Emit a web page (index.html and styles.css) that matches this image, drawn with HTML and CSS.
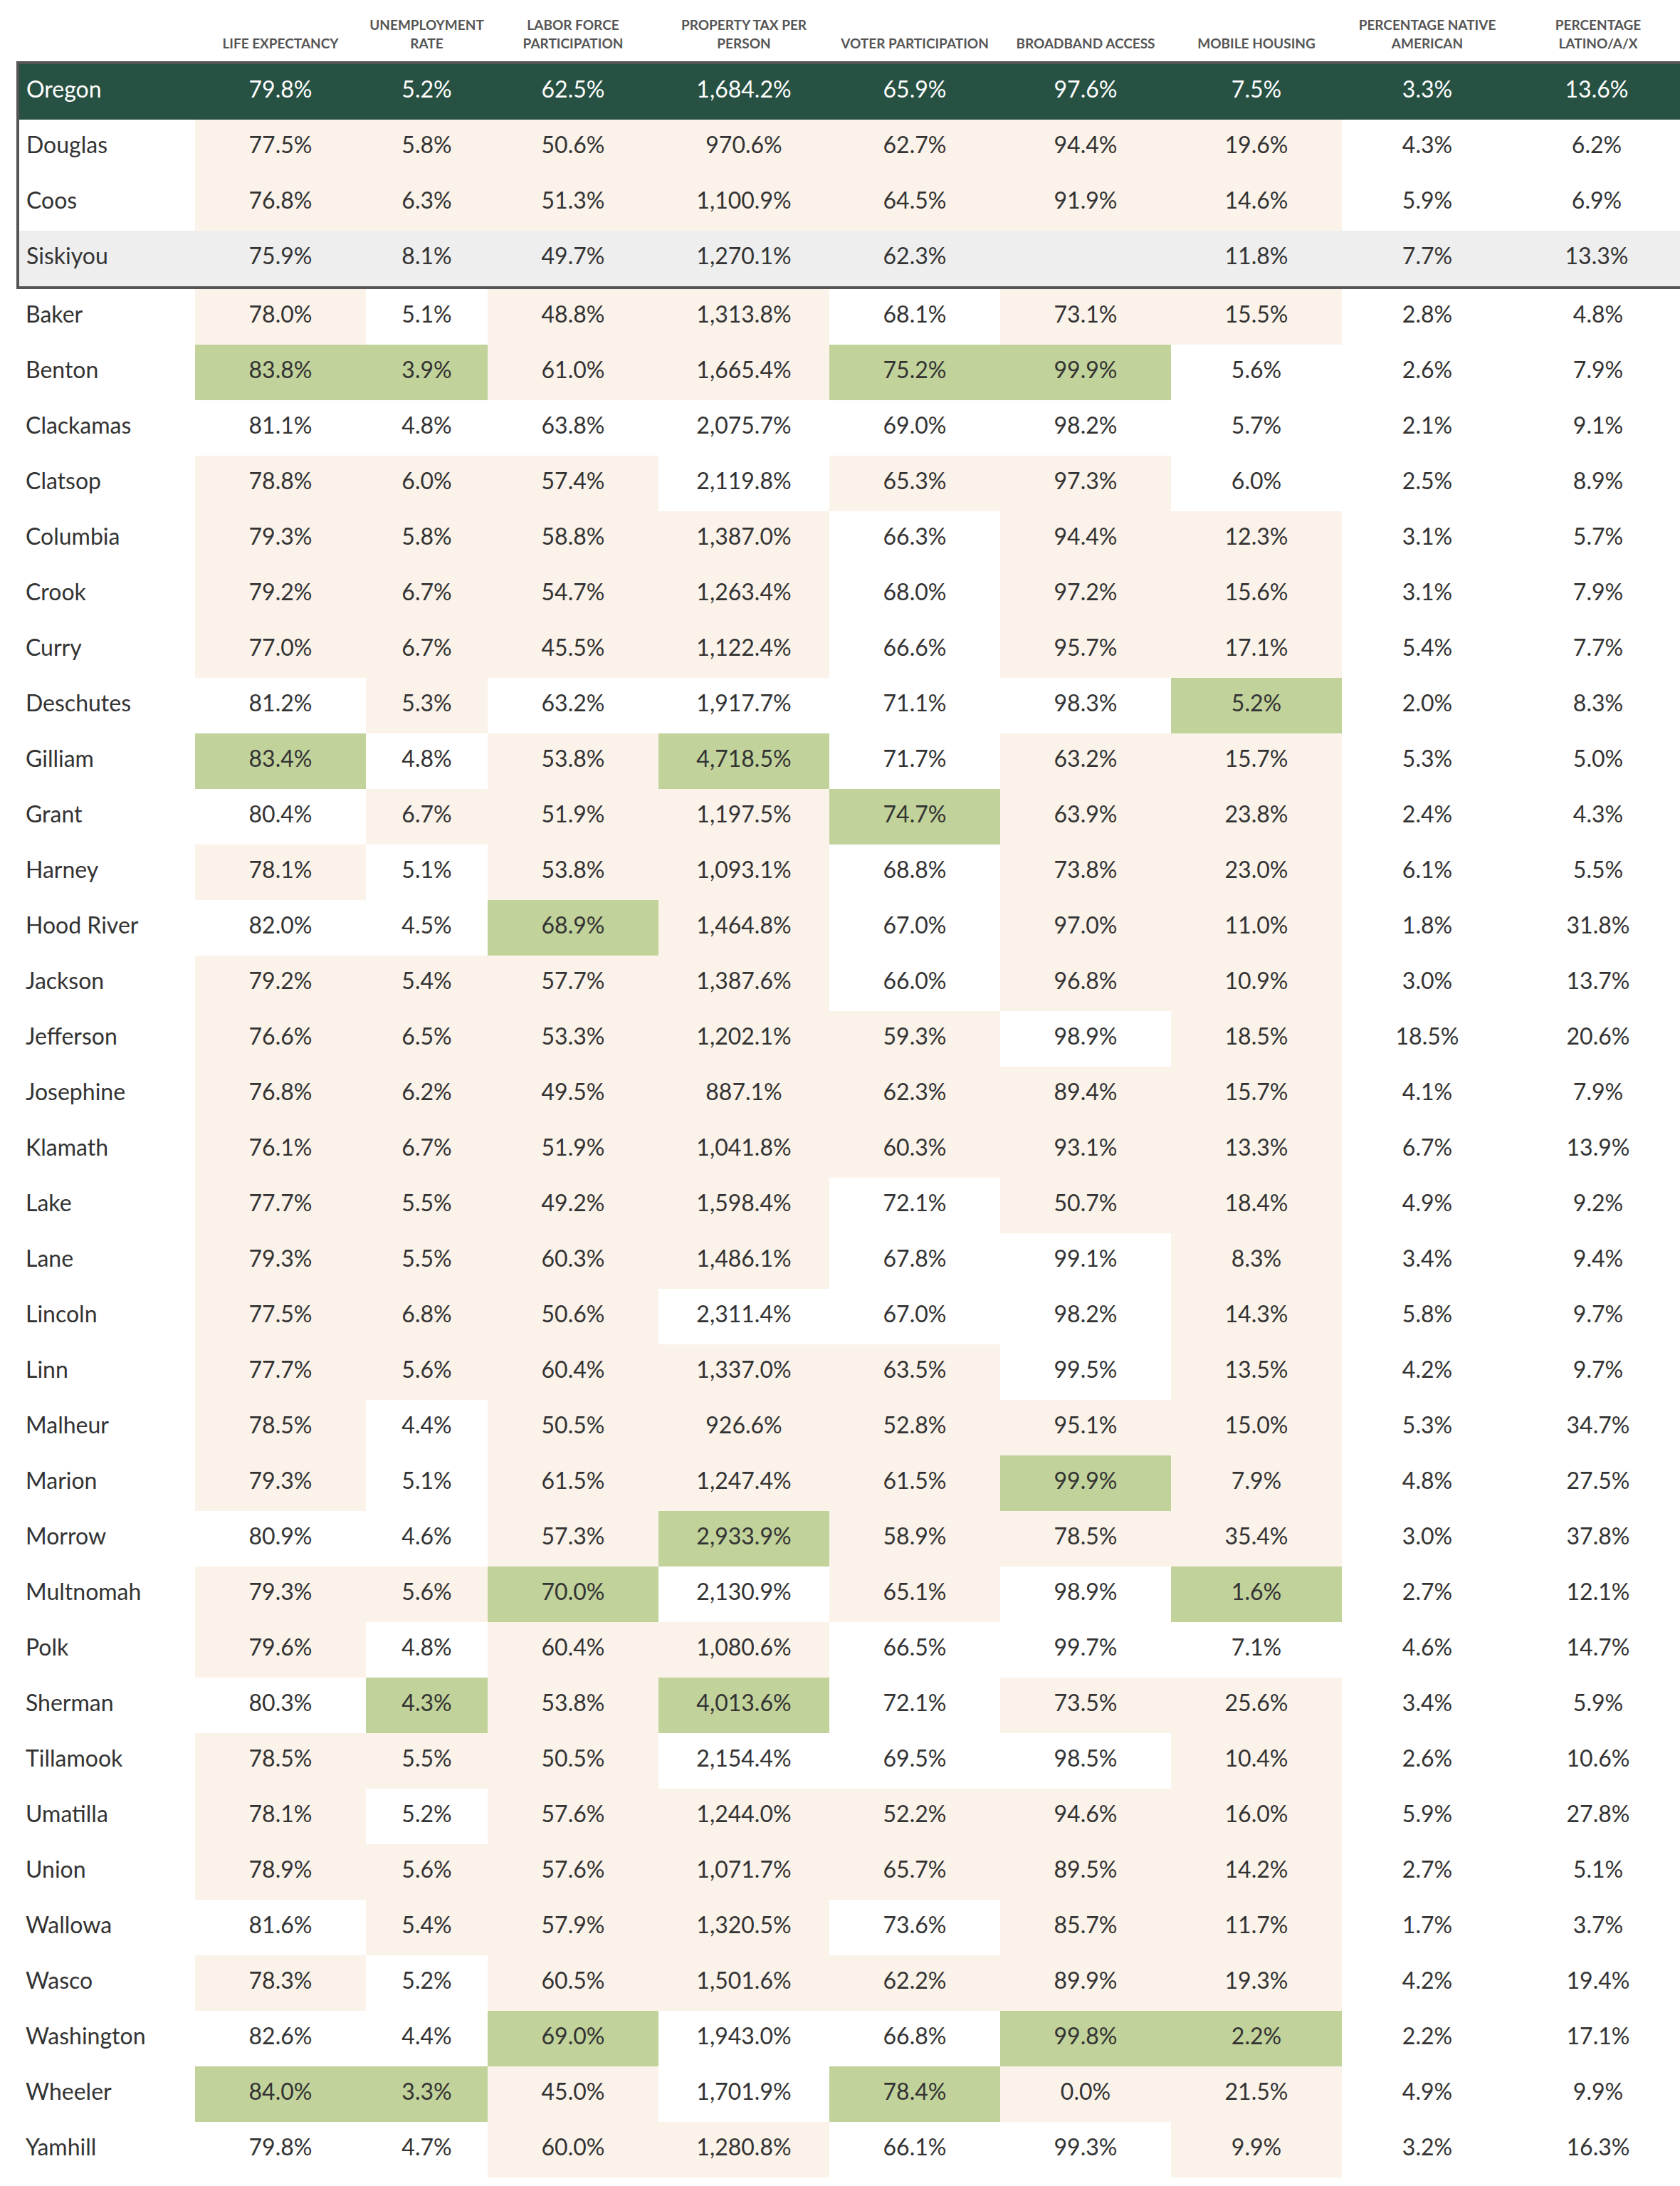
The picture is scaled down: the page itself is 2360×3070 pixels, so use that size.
FILE: index.html
```html
<!DOCTYPE html>
<html lang="en">
<head>
<meta charset="utf-8">
<title>Oregon county indicators</title>
<link rel="stylesheet" href="styles.css">
</head>
<body>
<table class="data">
  <colgroup>
    <col class="c-name">
    <col class="c-wide">
    <col class="c-narrow">
    <col class="c-wide">
    <col class="c-wide">
    <col class="c-wide">
    <col class="c-wide">
    <col class="c-wide">
    <col class="c-wide">
    <col class="c-wide">
  </colgroup>
  <thead>
    <tr>
      <th></th>
      <th>LIFE EXPECTANCY</th>
      <th>UNEMPLOYMENT<br>RATE</th>
      <th>LABOR FORCE<br>PARTICIPATION</th>
      <th>PROPERTY TAX PER<br>PERSON</th>
      <th>VOTER PARTICIPATION</th>
      <th>BROADBAND ACCESS</th>
      <th>MOBILE HOUSING</th>
      <th>PERCENTAGE NATIVE<br>AMERICAN</th>
      <th>PERCENTAGE<br>LATINO/A/X</th>
    </tr>
  </thead>
  <tbody class="group">
    <tr class="state"><td>Oregon</td><td>79.8%</td><td>5.2%</td><td>62.5%</td><td>1,684.2%</td><td>65.9%</td><td>97.6%</td><td>7.5%</td><td>3.3%</td><td>13.6%</td></tr>
    <tr><td>Douglas</td><td class="p">77.5%</td><td class="p">5.8%</td><td class="p">50.6%</td><td class="p">970.6%</td><td class="p">62.7%</td><td class="p">94.4%</td><td class="p">19.6%</td><td>4.3%</td><td>6.2%</td></tr>
    <tr><td>Coos</td><td class="p">76.8%</td><td class="p">6.3%</td><td class="p">51.3%</td><td class="p">1,100.9%</td><td class="p">64.5%</td><td class="p">91.9%</td><td class="p">14.6%</td><td>5.9%</td><td>6.9%</td></tr>
    <tr class="gray last"><td>Siskiyou</td><td>75.9%</td><td>8.1%</td><td>49.7%</td><td>1,270.1%</td><td>62.3%</td><td></td><td>11.8%</td><td>7.7%</td><td>13.3%</td></tr>
  </tbody>
  <tbody>
    <tr><td>Baker</td><td class="p">78.0%</td><td>5.1%</td><td class="p">48.8%</td><td class="p">1,313.8%</td><td>68.1%</td><td class="p">73.1%</td><td class="p">15.5%</td><td>2.8%</td><td>4.8%</td></tr>
    <tr><td>Benton</td><td class="g">83.8%</td><td class="g">3.9%</td><td class="p">61.0%</td><td class="p">1,665.4%</td><td class="g">75.2%</td><td class="g">99.9%</td><td>5.6%</td><td>2.6%</td><td>7.9%</td></tr>
    <tr><td>Clackamas</td><td>81.1%</td><td>4.8%</td><td>63.8%</td><td>2,075.7%</td><td>69.0%</td><td>98.2%</td><td>5.7%</td><td>2.1%</td><td>9.1%</td></tr>
    <tr><td>Clatsop</td><td class="p">78.8%</td><td class="p">6.0%</td><td class="p">57.4%</td><td>2,119.8%</td><td class="p">65.3%</td><td class="p">97.3%</td><td>6.0%</td><td>2.5%</td><td>8.9%</td></tr>
    <tr><td>Columbia</td><td class="p">79.3%</td><td class="p">5.8%</td><td class="p">58.8%</td><td class="p">1,387.0%</td><td>66.3%</td><td class="p">94.4%</td><td class="p">12.3%</td><td>3.1%</td><td>5.7%</td></tr>
    <tr><td>Crook</td><td class="p">79.2%</td><td class="p">6.7%</td><td class="p">54.7%</td><td class="p">1,263.4%</td><td>68.0%</td><td class="p">97.2%</td><td class="p">15.6%</td><td>3.1%</td><td>7.9%</td></tr>
    <tr><td>Curry</td><td class="p">77.0%</td><td class="p">6.7%</td><td class="p">45.5%</td><td class="p">1,122.4%</td><td>66.6%</td><td class="p">95.7%</td><td class="p">17.1%</td><td>5.4%</td><td>7.7%</td></tr>
    <tr><td>Deschutes</td><td>81.2%</td><td class="p">5.3%</td><td>63.2%</td><td>1,917.7%</td><td>71.1%</td><td>98.3%</td><td class="g">5.2%</td><td>2.0%</td><td>8.3%</td></tr>
    <tr><td>Gilliam</td><td class="g">83.4%</td><td>4.8%</td><td class="p">53.8%</td><td class="g">4,718.5%</td><td>71.7%</td><td class="p">63.2%</td><td class="p">15.7%</td><td>5.3%</td><td>5.0%</td></tr>
    <tr><td>Grant</td><td>80.4%</td><td class="p">6.7%</td><td class="p">51.9%</td><td class="p">1,197.5%</td><td class="g">74.7%</td><td class="p">63.9%</td><td class="p">23.8%</td><td>2.4%</td><td>4.3%</td></tr>
    <tr><td>Harney</td><td class="p">78.1%</td><td>5.1%</td><td class="p">53.8%</td><td class="p">1,093.1%</td><td>68.8%</td><td class="p">73.8%</td><td class="p">23.0%</td><td>6.1%</td><td>5.5%</td></tr>
    <tr><td>Hood River</td><td>82.0%</td><td>4.5%</td><td class="g">68.9%</td><td class="p">1,464.8%</td><td>67.0%</td><td class="p">97.0%</td><td class="p">11.0%</td><td>1.8%</td><td>31.8%</td></tr>
    <tr><td>Jackson</td><td class="p">79.2%</td><td class="p">5.4%</td><td class="p">57.7%</td><td class="p">1,387.6%</td><td>66.0%</td><td class="p">96.8%</td><td class="p">10.9%</td><td>3.0%</td><td>13.7%</td></tr>
    <tr><td>Jefferson</td><td class="p">76.6%</td><td class="p">6.5%</td><td class="p">53.3%</td><td class="p">1,202.1%</td><td class="p">59.3%</td><td>98.9%</td><td class="p">18.5%</td><td>18.5%</td><td>20.6%</td></tr>
    <tr><td>Josephine</td><td class="p">76.8%</td><td class="p">6.2%</td><td class="p">49.5%</td><td class="p">887.1%</td><td class="p">62.3%</td><td class="p">89.4%</td><td class="p">15.7%</td><td>4.1%</td><td>7.9%</td></tr>
    <tr><td>Klamath</td><td class="p">76.1%</td><td class="p">6.7%</td><td class="p">51.9%</td><td class="p">1,041.8%</td><td class="p">60.3%</td><td class="p">93.1%</td><td class="p">13.3%</td><td>6.7%</td><td>13.9%</td></tr>
    <tr><td>Lake</td><td class="p">77.7%</td><td class="p">5.5%</td><td class="p">49.2%</td><td class="p">1,598.4%</td><td>72.1%</td><td class="p">50.7%</td><td class="p">18.4%</td><td>4.9%</td><td>9.2%</td></tr>
    <tr><td>Lane</td><td class="p">79.3%</td><td class="p">5.5%</td><td class="p">60.3%</td><td class="p">1,486.1%</td><td>67.8%</td><td>99.1%</td><td class="p">8.3%</td><td>3.4%</td><td>9.4%</td></tr>
    <tr><td>Lincoln</td><td class="p">77.5%</td><td class="p">6.8%</td><td class="p">50.6%</td><td>2,311.4%</td><td>67.0%</td><td>98.2%</td><td class="p">14.3%</td><td>5.8%</td><td>9.7%</td></tr>
    <tr><td>Linn</td><td class="p">77.7%</td><td class="p">5.6%</td><td class="p">60.4%</td><td class="p">1,337.0%</td><td class="p">63.5%</td><td>99.5%</td><td class="p">13.5%</td><td>4.2%</td><td>9.7%</td></tr>
    <tr><td>Malheur</td><td class="p">78.5%</td><td>4.4%</td><td class="p">50.5%</td><td class="p">926.6%</td><td class="p">52.8%</td><td class="p">95.1%</td><td class="p">15.0%</td><td>5.3%</td><td>34.7%</td></tr>
    <tr><td>Marion</td><td class="p">79.3%</td><td>5.1%</td><td class="p">61.5%</td><td class="p">1,247.4%</td><td class="p">61.5%</td><td class="g">99.9%</td><td class="p">7.9%</td><td>4.8%</td><td>27.5%</td></tr>
    <tr><td>Morrow</td><td>80.9%</td><td>4.6%</td><td class="p">57.3%</td><td class="g">2,933.9%</td><td class="p">58.9%</td><td class="p">78.5%</td><td class="p">35.4%</td><td>3.0%</td><td>37.8%</td></tr>
    <tr><td>Multnomah</td><td class="p">79.3%</td><td class="p">5.6%</td><td class="g">70.0%</td><td>2,130.9%</td><td class="p">65.1%</td><td>98.9%</td><td class="g">1.6%</td><td>2.7%</td><td>12.1%</td></tr>
    <tr><td>Polk</td><td class="p">79.6%</td><td>4.8%</td><td class="p">60.4%</td><td class="p">1,080.6%</td><td>66.5%</td><td>99.7%</td><td>7.1%</td><td>4.6%</td><td>14.7%</td></tr>
    <tr><td>Sherman</td><td>80.3%</td><td class="g">4.3%</td><td class="p">53.8%</td><td class="g">4,013.6%</td><td>72.1%</td><td class="p">73.5%</td><td class="p">25.6%</td><td>3.4%</td><td>5.9%</td></tr>
    <tr><td>Tillamook</td><td class="p">78.5%</td><td class="p">5.5%</td><td class="p">50.5%</td><td>2,154.4%</td><td>69.5%</td><td>98.5%</td><td class="p">10.4%</td><td>2.6%</td><td>10.6%</td></tr>
    <tr><td>Umatilla</td><td class="p">78.1%</td><td>5.2%</td><td class="p">57.6%</td><td class="p">1,244.0%</td><td class="p">52.2%</td><td class="p">94.6%</td><td class="p">16.0%</td><td>5.9%</td><td>27.8%</td></tr>
    <tr><td>Union</td><td class="p">78.9%</td><td class="p">5.6%</td><td class="p">57.6%</td><td class="p">1,071.7%</td><td class="p">65.7%</td><td class="p">89.5%</td><td class="p">14.2%</td><td>2.7%</td><td>5.1%</td></tr>
    <tr><td>Wallowa</td><td>81.6%</td><td class="p">5.4%</td><td class="p">57.9%</td><td class="p">1,320.5%</td><td>73.6%</td><td class="p">85.7%</td><td class="p">11.7%</td><td>1.7%</td><td>3.7%</td></tr>
    <tr><td>Wasco</td><td class="p">78.3%</td><td>5.2%</td><td class="p">60.5%</td><td class="p">1,501.6%</td><td class="p">62.2%</td><td class="p">89.9%</td><td class="p">19.3%</td><td>4.2%</td><td>19.4%</td></tr>
    <tr><td>Washington</td><td>82.6%</td><td>4.4%</td><td class="g">69.0%</td><td>1,943.0%</td><td>66.8%</td><td class="g">99.8%</td><td class="g">2.2%</td><td>2.2%</td><td>17.1%</td></tr>
    <tr><td>Wheeler</td><td class="g">84.0%</td><td class="g">3.3%</td><td class="p">45.0%</td><td>1,701.9%</td><td class="g">78.4%</td><td class="p">0.0%</td><td class="p">21.5%</td><td>4.9%</td><td>9.9%</td></tr>
    <tr><td>Yamhill</td><td>79.8%</td><td>4.7%</td><td class="p">60.0%</td><td class="p">1,280.8%</td><td>66.1%</td><td>99.3%</td><td class="p">9.9%</td><td>3.2%</td><td>16.3%</td></tr>
  </tbody>
</table>
</body>
</html>
```
FILE: styles.css
```css
html {
  overflow-x: hidden;
  background: #ffffff;
}

body {
  margin: 0;
  background: #ffffff;
  font-family: Lato, "Open Sans", "Liberation Sans", sans-serif;
  color: #333333;
}

.data {
  table-layout: fixed;
  border-collapse: separate;
  border-spacing: 0;
  width: 2342px;
  margin-left: 23px;
}

.c-name { width: 251px; }
.c-wide { width: 240px; }
.c-narrow { width: 171px; }

.data th {
  padding: 22px 4px 12px;
  font-size: 19px;
  line-height: 26px;
  font-weight: 700;
  color: #555555;
  text-align: center;
  vertical-align: bottom;
  white-space: nowrap;
}

.data td {
  padding: 0 0 8px;
  font-size: 32px;
  line-height: 70px;
  text-align: center;
  vertical-align: middle;
  white-space: nowrap;
  color: #333333;
}

.data td:first-child {
  text-align: left;
  padding-left: 13px;
}

.data td.p { background: #fbf2e9; }
.data td.g { background: #c1d29a; }

/* framed comparison group */
.group td:first-child {
  border-left: 4px solid #555555;
  padding-left: 10px;
}
.group td:last-child {
  border-right: 4px solid #555555;
}
.group tr.state td {
  border-top: 4px solid #555555;
  background: #275142;
  color: #ffffff;
}
.group tr.last td {
  border-bottom: 4px solid #555555;
}
.group tr.gray td {
  background: #eeeeee;
}
```
